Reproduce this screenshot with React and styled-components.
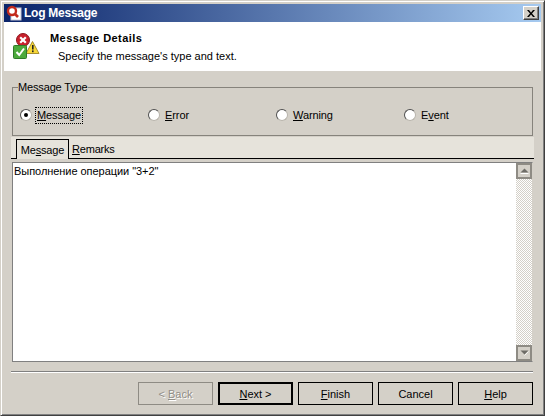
import styled, { createGlobalStyle } from "styled-components";

const GlobalStyle = createGlobalStyle`
  html, body {
    margin: 0;
    padding: 0;
    background: #d4d0c8;
  }
  body {
    font-family: "Liberation Sans", Arial, sans-serif;
    font-size: 11px;
    color: #000;
  }
  u {
    text-underline-offset: 1px;
  }
`;

const Window = styled.div`
  box-sizing: border-box;
  width: 545px;
  height: 416px;
  display: flex;
  flex-direction: column;
  padding: 4px 4px 2px;
  background: #d4d0c8;
  border-style: solid;
  border-width: 1px;
  border-color: #d4d0c8 #404040 #404040 #d4d0c8;
  box-shadow: inset 1px 1px 0 #fff, inset -1px -1px 0 #808080;
`;

const TitleBar = styled.div`
  flex: none;
  height: 18px;
  margin: -1px -1px 0;
  display: flex;
  align-items: center;
  gap: 1px;
  padding: 0 2px;
  background: linear-gradient(90deg, #0a246a 0%, #a6caf0 100%);
`;

const TitleText = styled.span`
  flex: 1;
  color: #fff;
  font-weight: bold;
  font-size: 12px;
  letter-spacing: -0.25px;
`;

const CloseButton = styled.div`
  box-sizing: border-box;
  width: 16px;
  height: 14px;
  display: flex;
  align-items: center;
  justify-content: center;
  background: #d4d0c8;
  border: 1px solid;
  border-color: #fff #404040 #404040 #fff;
  box-shadow: inset -1px -1px 0 #808080;
`;

const Header = styled.div`
  flex: none;
  height: 47px;
  margin: 0 -1px;
  display: flex;
  background: #fff;
  border-bottom: 2px solid;
  border-image: linear-gradient(#808080 50%, #fff 50%) 1;
`;

const HeaderIcon = styled.div`
  box-sizing: border-box;
  width: 46px;
  flex: none;
  padding: 11px 0 0 9px;
`;

const HeaderText = styled.div`
  display: flex;
  flex-direction: column;
  padding: 9px 0 0 0;
`;

const HeaderTitle = styled.div`
  font-weight: bold;
  font-size: 11px;
  letter-spacing: 0.45px;
  height: 18px;
  line-height: 14px;
`;

const HeaderSub = styled.div`
  padding-left: 8px;
  line-height: 14px;
`;

const Content = styled.div`
  flex: 1;
  min-height: 0;
  display: flex;
  flex-direction: column;
  padding: 0 7px;
`;

const GroupBox = styled.fieldset`
  box-sizing: border-box;
  flex: none;
  height: 56px;
  margin: 9px 0 0;
  min-width: 0;
  padding: 0 0 0 7px;
  display: flex;
  border: 1px solid #86837c;
`;

const GroupLegend = styled.legend`
  padding: 0;
  margin-left: -2px;
  line-height: 14px;
  letter-spacing: -0.15px;
`;

const RadioOption = styled.label`
  width: 128px;
  display: flex;
  align-items: center;
  gap: 3px;
  height: 20px;
  margin-top: 11px;
`;

const RadioCircle = styled.span`
  box-sizing: border-box;
  width: 12px;
  height: 12px;
  flex: none;
  border-radius: 50%;
  background: #fff;
  border: 1px solid #4f4f4f;
  border-right-color: #b8b4ac;
  border-bottom-color: #b8b4ac;
  display: flex;
  align-items: center;
  justify-content: center;
`;

const RadioDot = styled.span`
  width: 4px;
  height: 4px;
  border-radius: 50%;
  background: #000;
`;

const RadioLabel = styled.span`
  padding: 1px;
  line-height: 13px;
  letter-spacing: -0.1px;
  border: 1px dotted ${(p) => (p.$focused ? "#000" : "transparent")};
`;

const TabStrip = styled.div`
  flex: none;
  height: 21px;
  margin: 1px -1px 0;
  display: flex;
  align-items: flex-end;
  padding-left: 5px;
  background: #e6e3db;
  border-bottom: 1px solid #000;
`;

const Tab = styled.div`
  box-sizing: border-box;
  display: flex;
  align-items: center;
  justify-content: ${(p) => (p.$active ? "center" : "flex-start")};
  letter-spacing: -0.2px;
  width: ${(p) => (p.$active ? "53px" : "48px")};
  height: ${(p) => (p.$active ? "20px" : "18px")};
  margin-bottom: ${(p) => (p.$active ? "-1px" : "0")};
  padding: ${(p) => (p.$active ? "0" : "0 0 1px 3px")};
  background: #e6e3db;
  border: ${(p) => (p.$active ? "1px solid #000" : "none")};
  border-bottom: none;
`;

const EditArea = styled.div`
  box-sizing: border-box;
  flex: none;
  height: 200px;
  margin-top: 3px;
  display: flex;
  background: #fff;
  border: 1px solid;
  border-color: #808080 #d4d0c8 #808080 #808080;
`;

const EditText = styled.div`
  flex: 1;
  padding: 1px;
  line-height: 14px;
  letter-spacing: -0.05px;
`;

const ScrollBar = styled.div`
  width: 16px;
  flex: none;
  display: flex;
  flex-direction: column;
  background-color: #fff;
  background-image: conic-gradient(#d4d0c8 25%, #fff 0 50%, #d4d0c8 0 75%, #fff 0);
  background-size: 2px 2px;
`;

const ScrollButton = styled.div`
  box-sizing: border-box;
  width: 16px;
  height: 16px;
  flex: none;
  display: flex;
  align-items: center;
  justify-content: center;
  background: #d4d0c8;
  border: 2px solid #8e8b84;
`;

const ScrollTrack = styled.div`
  flex: 1;
`;

const Separator = styled.div`
  flex: none;
  height: 1px;
  margin: 9px 0 0 -1px;
  background: #808080;
  box-shadow: 0 1px 0 #fff;
`;

const ButtonRow = styled.div`
  flex: none;
  margin-top: 10px;
  display: flex;
  justify-content: flex-end;
  gap: 5px;
`;

const WizardButton = styled.button`
  box-sizing: border-box;
  width: 75px;
  height: 23px;
  padding: 0;
  font: inherit;
  color: ${(p) => (p.disabled ? "#918e87" : "#000")};
  text-shadow: ${(p) => (p.disabled ? "1px 1px 0 #fff" : "none")};
  background: #d4d0c8;
  border: ${(p) => (p.$default ? "2px solid #000" : "1px solid")};
  border-color: ${(p) => (p.disabled ? "#8e8b84" : "#000")};
`;

const TitleIcon = () => (
  <svg width="17" height="16" viewBox="0 0 17 16">
    <rect x="5" y="3" width="10" height="12" fill="#fff" stroke="#c8c8d8" />
    <circle cx="6" cy="6" r="4" fill="#fff" stroke="#c22a1c" strokeWidth="2.4" />
    <path d="M8.5 8.5L12 12" stroke="#c22a1c" strokeWidth="2.6" />
  </svg>
);

const CloseGlyph = () => (
  <svg width="8" height="7" viewBox="0 0 8 7">
    <path d="M0 0L2 0L4 2.5L6 0L8 0L5 3.5L8 7L6 7L4 4.5L2 7L0 7L3 3.5Z" fill="#000" />
  </svg>
);

const DetailsIcon = () => (
  <svg width="27" height="27" viewBox="0 0 27 27">
    <circle cx="10" cy="7" r="6.5" fill="#c8202c" stroke="#8e1820" />
    <path d="M7.2 4.2L12.8 9.8M12.8 4.2L7.2 9.8" stroke="#fff" strokeWidth="2.2" />
    <path d="M19.5 8.5L26 20.5L13 20.5Z" fill="#f8d838" stroke="#a89030" />
    <rect x="19" y="12" width="1.6" height="4.5" fill="#222" />
    <rect x="19" y="17.4" width="1.6" height="1.8" fill="#222" />
    <rect x="0.5" y="12.5" width="13" height="13" rx="1" fill="#4caa3c" stroke="#2e7a28" />
    <path d="M3.5 19L6.2 22L11 15.5" fill="none" stroke="#fff" strokeWidth="2" />
  </svg>
);

const ArrowGlyph = ({ down }) => (
  <svg width="9" height="6" viewBox="0 0 9 6">
    {down ? (
      <>
        <path d="M0.5 0.5L8.5 0.5L4.5 4.5Z" fill="#6e6c67" />
        <path d="M4.5 5.5L8.5 1.5" stroke="#fff" strokeWidth="0.8" />
      </>
    ) : (
      <>
        <path d="M4.5 0.5L8.5 4.5L0.5 4.5Z" fill="#6e6c67" />
        <path d="M0.5 5.5L8.5 5.5" stroke="#fff" />
      </>
    )}
  </svg>
);

const radioOptions = [
  { key: "message", before: "", mark: "M", after: "essage", checked: true },
  { key: "error", before: "", mark: "E", after: "rror" },
  { key: "warning", before: "", mark: "W", after: "arning" },
  { key: "event", before: "E", mark: "v", after: "ent" },
];

const App = () => (
  <>
    <GlobalStyle />
    <Window>
      <TitleBar>
        <TitleIcon />
        <TitleText>Log Message</TitleText>
        <CloseButton>
          <CloseGlyph />
        </CloseButton>
      </TitleBar>
      <Header>
        <HeaderIcon>
          <DetailsIcon />
        </HeaderIcon>
        <HeaderText>
          <HeaderTitle>Message Details</HeaderTitle>
          <HeaderSub>Specify the message's type and text.</HeaderSub>
        </HeaderText>
      </Header>
      <Content>
        <GroupBox>
          <GroupLegend>Message Type</GroupLegend>
          {radioOptions.map((o) => (
            <RadioOption key={o.key}>
              <RadioCircle>{o.checked && <RadioDot />}</RadioCircle>
              <RadioLabel $focused={o.checked}>
                {o.before}
                <u>{o.mark}</u>
                {o.after}
              </RadioLabel>
            </RadioOption>
          ))}
        </GroupBox>
        <TabStrip>
          <Tab $active>
            <span>
              Me<u>s</u>sage
            </span>
          </Tab>
          <Tab>
            <span>
              <u>R</u>emarks
            </span>
          </Tab>
        </TabStrip>
        <EditArea>
          <EditText>Выполнение операции "3+2"</EditText>
          <ScrollBar>
            <ScrollButton>
              <ArrowGlyph />
            </ScrollButton>
            <ScrollTrack />
            <ScrollButton>
              <ArrowGlyph down />
            </ScrollButton>
          </ScrollBar>
        </EditArea>
        <Separator />
        <ButtonRow>
          <WizardButton disabled>
            &lt; <u>B</u>ack
          </WizardButton>
          <WizardButton $default>
            <u>N</u>ext &gt;
          </WizardButton>
          <WizardButton>
            <u>F</u>inish
          </WizardButton>
          <WizardButton>Cancel</WizardButton>
          <WizardButton>
            <u>H</u>elp
          </WizardButton>
        </ButtonRow>
      </Content>
    </Window>
  </>
);

export default App;
